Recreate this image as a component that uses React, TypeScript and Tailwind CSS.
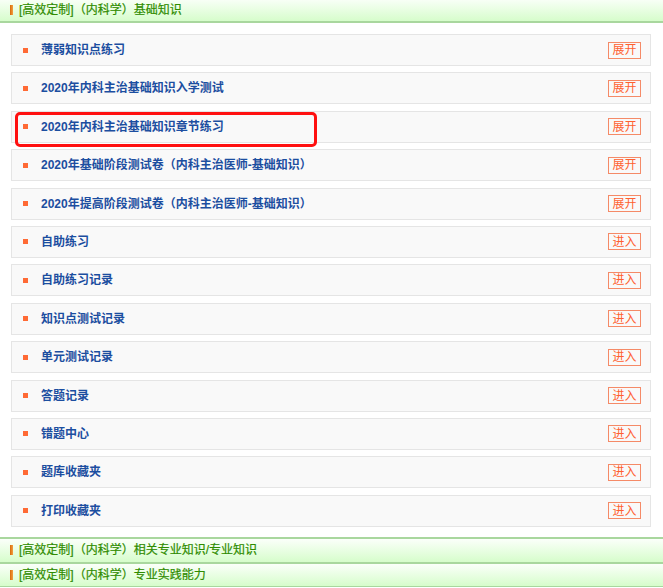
const rows: { title: string; action: string }[] = [
  { title: "薄弱知识点练习", action: "展开" },
  { title: "2020年内科主治基础知识入学测试", action: "展开" },
  { title: "2020年内科主治基础知识章节练习", action: "展开" },
  { title: "2020年基础阶段测试卷（内科主治医师-基础知识）", action: "展开" },
  { title: "2020年提高阶段测试卷（内科主治医师-基础知识）", action: "展开" },
  { title: "自助练习", action: "进入" },
  { title: "自助练习记录", action: "进入" },
  { title: "知识点测试记录", action: "进入" },
  { title: "单元测试记录", action: "进入" },
  { title: "答题记录", action: "进入" },
  { title: "错题中心", action: "进入" },
  { title: "题库收藏夹", action: "进入" },
  { title: "打印收藏夹", action: "进入" },
];

function SectionHeader({ title, top, last }: { title: string; top?: boolean; last?: boolean }) {
  return (
    <div
      className={
        "flex items-center h-[25px] bg-gradient-to-b from-[#fbfffa] to-[#d6fdcb] border-[#a9d79e] " +
        (top ? "border-b-2" : "border-t-2") +
        (last ? " border-b" : "")
      }
    >
      <span className="ml-[10px] w-[3px] h-[10px] bg-gradient-to-r from-[#d86a00] to-[#f2a040]" />
      <span className="ml-[6px] text-[12px] text-[#2f8c00] leading-none [-webkit-text-stroke:0.2px_#2f8c00]">
        {title}
      </span>
    </div>
  );
}

export default function App() {
  return (
    <div
      className="relative w-[663px] h-[588px] bg-white overflow-hidden"
      style={{ fontFamily: '"Liberation Sans", "Noto Sans CJK SC", sans-serif' }}
    >
      <div className="-mt-[2px]">
        <SectionHeader title="[高效定制]（内科学）基础知识" top />
      </div>

      <div className="flex flex-col gap-[6.4px] pl-[11px] pr-[12px] pt-[11px] pb-[10px]">
        {rows.map((row) => (
          <div
            key={row.title}
            className="flex items-center h-[32px] bg-[#f9f9f9] border border-[#e5e5e5]"
          >
            <span className="ml-[11px] w-[5px] h-[5px] bg-[#ff6a35]" />
            <span className="ml-[13px] text-[12px] font-bold text-[#1c4ea0] leading-none">
              {row.title}
            </span>
            <span className="ml-auto mr-[9px] flex items-center justify-center w-[33px] h-[17px] border border-[#f58a67] text-[12px] text-[#ff6030] leading-none">
              {row.action}
            </span>
          </div>
        ))}
      </div>

      <SectionHeader title="[高效定制]（内科学）相关专业知识/专业知识" />
      <SectionHeader title="[高效定制]（内科学）专业实践能力" last />

      {/* 标注框 */}
      <div className="absolute left-[15px] top-[112px] w-[302px] h-[35px] border-[3px] border-[#ff1010] rounded-[5px]" />
    </div>
  );
}
